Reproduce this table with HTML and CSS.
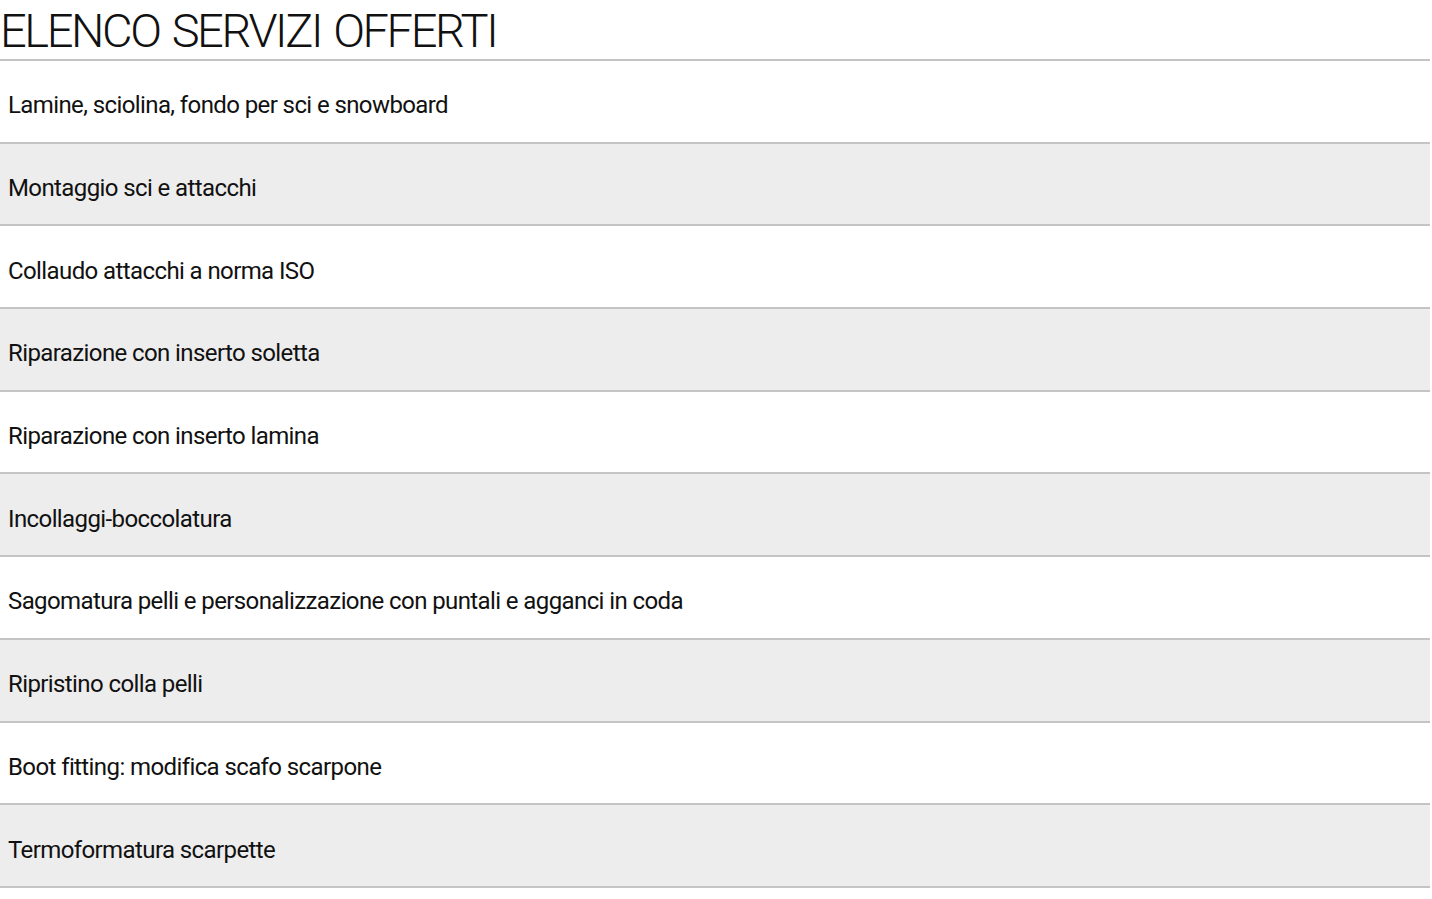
FILE: index.html
```html
<!DOCTYPE html>
<html lang="it">
<head>
<meta charset="utf-8">
<title>Elenco servizi offerti</title>
<link rel="stylesheet" href="styles.css">
</head>
<body>
<div class="page">
  <h1 class="title">ELENCO SERVIZI OFFERTI</h1>
  <ul class="list">
    <li class="row">Lamine, sciolina, fondo per sci e snowboard</li>
    <li class="row alt">Montaggio sci e attacchi</li>
    <li class="row">Collaudo attacchi a norma ISO</li>
    <li class="row alt">Riparazione con inserto soletta</li>
    <li class="row">Riparazione con inserto lamina</li>
    <li class="row alt">Incollaggi-boccolatura</li>
    <li class="row">Sagomatura pelli e personalizzazione con puntali e agganci in coda</li>
    <li class="row alt">Ripristino colla pelli</li>
    <li class="row">Boot fitting: modifica scafo scarpone</li>
    <li class="row alt">Termoformatura scarpette</li>
  </ul>
</div>
</body>
</html>
```
FILE: styles.css
```css
html, body {
  margin: 0;
  padding: 0;
  background: #ffffff;
}
.page {
  width: 1430px;
  font-family: Roboto, "Liberation Sans", Arial, sans-serif;
  color: #111111;
}
.title {
  margin: 0;
  height: 61px;
  box-sizing: border-box;
  padding-top: 7px;
  font-size: 47px;
  font-weight: 300;
  line-height: 48px;
  letter-spacing: -2.4px;
  word-spacing: 3px;
  border-bottom: 2px solid #c4c4c4;
}
.list {
  list-style: none;
  margin: 0;
  padding: 0;
}
.row {
  height: 82.7px;
  box-sizing: border-box;
  display: flex;
  align-items: center;
  padding: 8px 0 0 8px;
  font-size: 24px;
  letter-spacing: -0.6px;
  border-bottom: 2px solid #c4c4c4;
}
.row.alt {
  background: #ededed;
}
```
